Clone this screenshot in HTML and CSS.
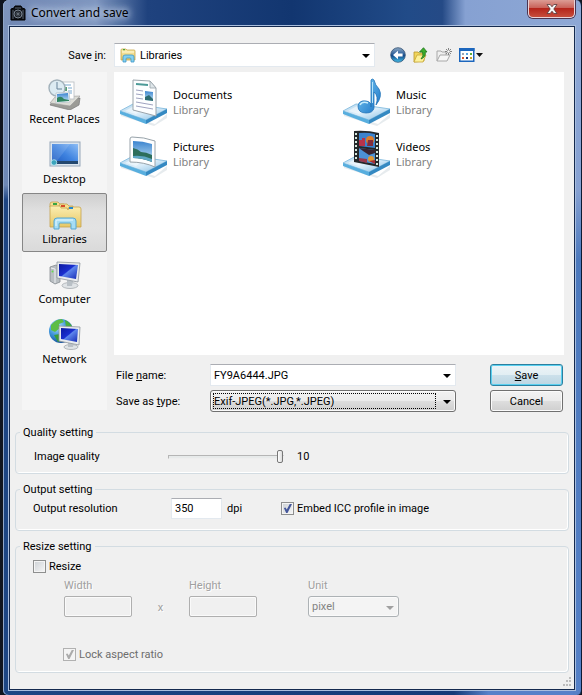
FILE: index.html
```html
<!DOCTYPE html>
<html lang="en">
<head>
<meta charset="UTF-8">
<title>Convert and save</title>
<link rel="stylesheet" href="styles.css">
</head>

<body>

<!-- shared gradients and the library base -->
<svg class="defs" aria-hidden="true">
    <defs>
        <linearGradient id="tray" x1="0" y1="0" x2="1" y2="1">
            <stop offset="0" stop-color="#b8d9ee"/>
            <stop offset="0.5" stop-color="#dceefa"/>
            <stop offset="1" stop-color="#7fbbe2"/>
        </linearGradient>
        <linearGradient id="folder" x1="0" y1="0" x2="0" y2="1">
            <stop offset="0" stop-color="#fbeeb2"/>
            <stop offset="1" stop-color="#e6c765"/>
        </linearGradient>
        <linearGradient id="sky" x1="0" y1="0" x2="0" y2="1">
            <stop offset="0" stop-color="#3b84cf"/>
            <stop offset="1" stop-color="#c9e8f6"/>
        </linearGradient>
        <linearGradient id="screen" x1="0" y1="0" x2="1" y2="1">
            <stop offset="0" stop-color="#0d1aa0"/>
            <stop offset="0.45" stop-color="#1a2fd0"/>
            <stop offset="0.5" stop-color="#5d86ec"/>
            <stop offset="1" stop-color="#1328b4"/>
        </linearGradient>
        <linearGradient id="desk" x1="0" y1="1" x2="1" y2="0">
            <stop offset="0" stop-color="#1a56bd"/>
            <stop offset="0.5" stop-color="#3f83e0"/>
            <stop offset="1" stop-color="#8dbdf5"/>
        </linearGradient>
        <linearGradient id="note" x1="0" y1="0" x2="1" y2="1">
            <stop offset="0" stop-color="#7fd0f7"/>
            <stop offset="1" stop-color="#1670c4"/>
        </linearGradient>
        <radialGradient id="globe" cx="0.35" cy="0.3" r="0.8">
            <stop offset="0" stop-color="#b5e4ff"/>
            <stop offset="0.5" stop-color="#3c92d8"/>
            <stop offset="1" stop-color="#10448e"/>
        </radialGradient>
        <linearGradient id="ball" x1="0" y1="0" x2="0" y2="1">
            <stop offset="0" stop-color="#8fa9c4"/>
            <stop offset="0.45" stop-color="#2c5f9a"/>
            <stop offset="0.55" stop-color="#124a8a"/>
            <stop offset="1" stop-color="#45c4ee"/>
        </linearGradient>
        <symbol id="base" viewBox="0 0 48 48">
            <path d="M1 35 L35 46 L47 36 V40 L34 48 L1 38 Z" fill="#d5dde3" opacity="0.6"/>
            <path d="M0 33 L13 26 L47 31 L26 42 Z" fill="url(#tray)" stroke="#8fc2e2"/>
            <path d="M0 33 L26 42 V46 L0 36 Z" fill="#58aede"/>
            <path d="M26 42 L47 31 V35 L26 46 Z" fill="#3489c2"/>
            <path d="M5 33 L14 28 L25 30 L16 36 Z" fill="#fff" opacity="0.5"/>
        </symbol>
    </defs>
</svg>

<div class="window">

    <header class="titlebar">
        <svg class="app-icon" width="16" height="16" viewBox="0 0 16 16">
            <path d="M1 4 L4 3 L5 1 H11 L12 3 L15 4 V15 H1 Z" fill="#0c0f14" stroke="#000"/>
            <path d="M3 5 V14 M13 5 V14 M5 3 H11" stroke="#56606c" fill="none"/>
            <circle cx="8" cy="9" r="4" fill="#181c22" stroke="#7a8592"/>
            <circle cx="8" cy="9" r="2" fill="#000" stroke="#525c68"/>
            <circle cx="8" cy="9" r="1" fill="#8793a0"/>
        </svg>
        <h1>Convert and save</h1>
        <button class="close" aria-label="Close">
            <svg width="12" height="10" viewBox="0 0 12 10">
                <path d="M1 0.5 H4.2 L6 2.8 L7.8 0.5 H11 L7.8 5 L11 9.5 H7.8 L6 7.2 L4.2 9.5 H1 L4.2 5 Z" fill="#f6f6f6" stroke="#56383a" stroke-width="0.8"/>
            </svg>
        </button>
    </header>

    <main class="client">

        <div class="lookin">
            <label for="folder-select">Save <u>i</u>n:</label>
            <div class="combo">
                <svg class="combo-icon" width="16" height="15" viewBox="0 0 16 15">
                    <path d="M1 2 Q1 1 2 1 H6 L7 2 H14 Q15 2 15 3 V12 H1 Z" fill="url(#folder)" stroke="#c9a84c" stroke-width="0.8"/>
                    <path d="M3 1.6 H5" stroke="#4aa33b" stroke-width="1.2"/>
                    <path d="M2 4 H14" stroke="#fff8d4"/>
                    <path d="M3 14 V9 Q3 7 5 7 H12 Q14 7 14 9 V14 H11 V11 Q11 10 10 10 H7 Q6 10 6 11 V14 Z" fill="#84d0f0" stroke="#3f98c8" stroke-width="0.8"/>
                </svg>
                <select id="folder-select" class="with-icon"><option>Libraries</option></select>
            </div>
            <div class="tools">
                <button aria-label="Back">
                    <svg width="16" height="16" viewBox="0 0 16 16">
                        <circle cx="8" cy="8" r="7.3" fill="url(#ball)" stroke="#345274" stroke-width="0.8"/>
                        <path d="M3 8 L8 3.8 V6.6 H12.6 V9.4 H8 V12.2 Z" fill="#fff"/>
                    </svg>
                </button>
                <button aria-label="Up one level">
                    <svg width="16" height="16" viewBox="0 0 16 16">
                        <path d="M1 5 H5 L6 6 H11 V14 L1 15 Z" fill="#f0d55c" stroke="#b7952b" stroke-width="0.8"/>
                        <path d="M1 15 L4 8 H13 L10 15 Z" fill="#fdf19a" stroke="#c7a636" stroke-width="0.8"/>
                        <path d="M8 12 Q11 9 9.6 5 H6.5 L10.5 0.7 L14 5 H12.2 Q13.2 10 8 12 Z" fill="#3cae2c" stroke="#1c7418" stroke-width="0.8"/>
                    </svg>
                </button>
                <button aria-label="New folder">
                    <svg width="16" height="16" viewBox="0 0 16 16">
                        <path d="M1 4 H5 L6 5 H10 V8 M1 4 V14" fill="#eee" stroke="#a8a8a8"/>
                        <path d="M1 14 L4 8 H14 L11 14 Z" fill="#f7f7f7" stroke="#a8a8a8"/>
                        <path d="M12.5 1 V8 M9 4.5 H16 M10 2 L15 7 M15 2 L10 7" stroke="#777" stroke-width="0.9"/>
                        <circle cx="12.5" cy="4.5" r="1.2" fill="#fff"/>
                    </svg>
                </button>
                <button aria-label="View menu">
                    <svg width="24" height="16" viewBox="0 0 24 16">
                        <rect x="0.75" y="1.75" width="14" height="12.5" fill="#fff" stroke="#1c66bd" stroke-width="1.5"/>
                        <rect x="0" y="1" width="15.5" height="3" fill="#1c66bd"/>
                        <path d="M3 7 H5" stroke="#9aa5b4" stroke-width="2"/>
                        <path d="M7 7 H9" stroke="#58a3e0" stroke-width="2"/>
                        <path d="M11 7 H13" stroke="#58ad3c" stroke-width="2"/>
                        <path d="M3 11 H5" stroke="#d6562b" stroke-width="2"/>
                        <path d="M7 11 H9" stroke="#163680" stroke-width="2"/>
                        <path d="M11 11 H13" stroke="#c9a42b" stroke-width="2"/>
                        <path d="M17 6 H24 L20.5 10 Z" fill="#111"/>
                    </svg>
                </button>
            </div>
        </div>

        <div class="browser">
            <nav class="places">
                <button>
                    <svg width="34" height="32" viewBox="0 0 34 32">
                        <path d="M2 27 L7 20 H32 L31 27 L22 32 Z" fill="#9b9b96" stroke="#777" stroke-width="0.7"/>
                        <path d="M2 25 L7 19 L32 18 L22 28 Z" fill="#dcdcd5" stroke="#999" stroke-width="0.6"/>
                        <rect x="13" y="4" width="13" height="17" fill="#fff" stroke="#b6bcc1" stroke-width="0.8"/>
                        <path d="M16 7 H23 M20 10 H24 M20 13 H24 M20 15 H24" stroke="#79a9cf"/>
                        <rect x="15" y="9" width="4" height="4" fill="#579f75"/>
                        <circle cx="9" cy="10" r="8" fill="#dcebf2" stroke="#a2b1ba" stroke-width="1.4"/>
                        <path d="M9 4 V11 H14" fill="none" stroke="#66839a"/>
                        <path d="M8 15 L21 14 L22 24 L8 25 Z" fill="#fff" stroke="#b8c3ca" stroke-width="0.8"/>
                        <path d="M9 16 L20 15 L21 23 L9 24 Z" fill="url(#sky)"/>
                        <path d="M9 20 Q13 17 16 21 L21 22 V23 L9 24 Z" fill="#2f8460"/>
                    </svg>
                    <span>Recent Places</span>
                </button>
                <button>
                    <svg width="34" height="32" viewBox="0 0 34 32">
                        <rect x="2" y="4" width="30" height="24" fill="#dbe5ef" stroke="#98a8ba"/>
                        <rect x="4" y="6" width="26" height="20" fill="url(#desk)"/>
                        <path d="M4 6 H22 L9 23 H4 Z" fill="#fff" opacity="0.12"/>
                        <rect x="4" y="23" width="26" height="3" fill="#24486f"/>
                        <circle cx="6" cy="24.5" r="2.8" fill="#3ba4bc" stroke="#b7eaf1" stroke-width="0.8"/>
                    </svg>
                    <span>Desktop</span>
                </button>
                <button class="active">
                    <svg width="34" height="32" viewBox="0 0 34 32">
                        <path d="M2 6 Q2 4 4 4 H10 L12 6 H16 V9 H2 Z" fill="#f6df91" stroke="#c5a24e" stroke-width="0.8"/>
                        <path d="M11 8 Q11 6 13 6 H19 L21 8 H25 V11 H11 Z" fill="#f6df91" stroke="#c5a24e" stroke-width="0.8"/>
                        <path d="M2 29 V8 H12 L13 10 H19 L20 12 L21 9 H31 Q33 9 33 11 V29 Z" fill="url(#folder)" stroke="#c5a24e" stroke-width="0.8"/>
                        <path d="M5 6 H9" stroke="#37a544" stroke-width="2"/>
                        <path d="M13 8 H17" stroke="#d64d28" stroke-width="2"/>
                        <path d="M21 10 H25" stroke="#2488d0" stroke-width="2"/>
                        <path d="M6 31 V23 Q6 20 9 20 H25 Q28 20 28 23 V31 H23 V26 Q23 25 22 25 H12 Q11 25 11 26 V31 Z" fill="#a6ddf4" stroke="#57a7d2"/>
                        <path d="M8 28 V23 Q8 22 9 22 H25" stroke="#e9f9ff" fill="none"/>
                    </svg>
                    <span>Libraries</span>
                </button>
                <button>
                    <svg width="34" height="32" viewBox="0 0 34 32">
                        <path d="M2 9 L8 7 L12 9 V24 L7 26 L2 23 Z" fill="#b9bec2" stroke="#858b90" stroke-width="0.8"/>
                        <path d="M3 10 L7 11 V25" fill="none" stroke="#eef1f3"/>
                        <circle cx="4.5" cy="13.5" r="1" fill="#64dc4c"/>
                        <ellipse cx="22" cy="27.5" rx="8" ry="3" fill="#dfe3e6" stroke="#a4aaaf" stroke-width="0.8"/>
                        <path d="M19 22 L25 23 L24 28 H19 Z" fill="#b9c0c6"/>
                        <path d="M9 4 L32 5 L30 24 L9 20 Z" fill="#e8ebee" stroke="#8e959c" stroke-width="0.8"/>
                        <path d="M11 6 L30 7 L28 21 L11 18 Z" fill="url(#screen)"/>
                    </svg>
                    <span>Computer</span>
                </button>
                <button>
                    <svg width="34" height="32" viewBox="0 0 34 32">
                        <circle cx="13" cy="13" r="12" fill="url(#globe)"/>
                        <path d="M3 7 Q8 1 14 1 L16 4 L11 6 L12 10 L7 14 L3 12 Z" fill="#5dbd45"/>
                        <path d="M17 2 Q23 5 24 9 L18 9 Z" fill="#4aae3c"/>
                        <path d="M6 17 L12 16 L14 22 L10 24 Z" fill="#3c9d38"/>
                        <ellipse cx="23" cy="29" rx="7" ry="2.5" fill="#dfe3e6" stroke="#a4aaaf" stroke-width="0.8"/>
                        <path d="M20 24 L26 25 L25 29 H20 Z" fill="#b9c0c6"/>
                        <path d="M11 8 L32 9 L31 27 L11 23 Z" fill="#e8ebee" stroke="#8e959c" stroke-width="0.8"/>
                        <path d="M13 10 L30 11 L29 24 L13 21 Z" fill="url(#screen)"/>
                    </svg>
                    <span>Network</span>
                </button>
            </nav>

            <div class="right">
                <ul class="files">
                    <li>
                        <svg width="48" height="48" viewBox="0 0 48 48">
                            <use href="#base"/>
                            <path d="M13 2 L30 3 L36 10 V38 L13 32 Z" fill="#fdfeff" stroke="#9aa4ab"/>
                            <path d="M30 3 V10 H36 Z" fill="#dfe6ea" stroke="#9aa4ab" stroke-width="0.8"/>
                            <path d="M16 6 L28 7" stroke="#4d9a98" stroke-width="2"/>
                            <path d="M16 12 L23 13 M16 16 L23 17 M16 20 L23 21 M16 24 L33 27 M16 28 L33 31" stroke="#9fa3c0"/>
                            <path d="M25 13 L33 14 V23 L25 22 Z" fill="url(#sky)"/>
                            <path d="M25 19 L29 17 L33 21 V23 L25 22 Z" fill="#2d6b72"/>
                        </svg>
                        <div><a href="#">Documents</a><span>Library</span></div>
                    </li>
                    <li>
                        <svg width="48" height="48" viewBox="0 0 48 48">
                            <use href="#base"/>
                            <path d="M28 29 V2 Q29 0 31 2 Q32 7 36 11 Q40 18 33 27 Q36 18 31 14 V30 Q30 35 23 35 Q15 35 15 28 Q16 22 23 23 Q26 23 28 26 Z" fill="url(#note)" stroke="#2373b8" stroke-width="0.8"/>
                            <path d="M17 27 Q19 23 25 25" stroke="#c5ecfc" stroke-width="1.5" fill="none"/>
                            <path d="M29.5 4 V25" stroke="#b4e4fb"/>
                        </svg>
                        <div><a href="#">Music</a><span>Library</span></div>
                    </li>
                    <li>
                        <svg width="48" height="48" viewBox="0 0 48 48">
                            <use href="#base"/>
                            <path d="M10 9 Q10 7 12 7 Q24 7 35 11 V37 Q24 32 10 32 Z" fill="#fdfeff" stroke="#98a3aa"/>
                            <path d="M13 11 Q23 11 32 14 V32 Q22 28 13 28 Z" fill="url(#sky)"/>
                            <path d="M13 18 Q18 19 21 22 Q26 22 32 25 V32 Q22 28 13 28 Z" fill="#2d6e5b"/>
                            <path d="M13 26 Q23 25 32 29 V32 Q22 28 13 28 Z" fill="#5fa7c5"/>
                        </svg>
                        <div><a href="#">Pictures</a><span>Library</span></div>
                    </li>
                    <li>
                        <svg width="48" height="48" viewBox="0 0 48 48">
                            <use href="#base"/>
                            <path d="M11 1 Q24 0 36 3 V37 L11 32 Z" fill="#24282b"/>
                            <path d="M13 3 V31 M34 5 V35" stroke="#d7e8de" stroke-width="2" stroke-dasharray="2 2"/>
                            <path d="M16 3 Q24 2 32 4 V18 L16 16 Z" fill="#3c83ce"/>
                            <path d="M16 18 L32 20 V34 L16 31 Z" fill="#4c92d6"/>
                            <path d="M16 10 H19 V8 H22 V16 L16 16 Z" fill="#b7334b"/>
                            <circle cx="27" cy="10" r="4" fill="#dc7e2c"/>
                            <path d="M25 10 H30 V16 H24 Z" fill="#822c3c"/>
                            <path d="M16 18 L32 20 V23 L26 25 L20 21 Z" fill="#3a2430"/>
                            <circle cx="28" cy="29" r="3" fill="#e09834"/>
                            <path d="M16 28 L24 29 V33 L16 31 Z" fill="#98384c"/>
                            <path d="M26 31 L32 30 V34 Z" fill="#a52f35"/>
                        </svg>
                        <div><a href="#">Videos</a><span>Library</span></div>
                    </li>
                </ul>

                <form class="names">
                    <label for="file-name">File <u>n</u>ame:</label>
                    <div class="combo">
                        <input id="file-name" type="text" value="FY9A6444.JPG">
                    </div>
                    <button type="button" class="btn default"><u>S</u>ave</button>
                    <label for="file-type">Save as <u>t</u>ype:</label>
                    <div class="combo focused">
                        <select id="file-type" class="raised"><option>Exif-JPEG(*.JPG,*.JPEG)</option></select>
                    </div>
                    <button type="button" class="btn">Cancel</button>
                </form>
            </div>
        </div>

        <div class="settings">
            <fieldset>
                <legend>Quality setting</legend>
                <div class="row quality">
                    <label for="quality">Image quality</label>
                    <input id="quality" type="range" min="1" max="10" value="10">
                    <output for="quality">10</output>
                </div>
            </fieldset>

            <fieldset>
                <legend>Output setting</legend>
                <div class="row resolution">
                    <label for="dpi">Output resolution</label>
                    <input id="dpi" class="sunken" type="text" value="350">
                    <span>dpi</span>
                    <label class="check"><input type="checkbox" checked>Embed ICC profile in image</label>
                </div>
            </fieldset>

            <fieldset class="resize">
                <legend>Resize setting</legend>
                <label class="check"><input type="checkbox">Resize</label>
                <div class="size">
                    <div class="field">
                        <label for="width">Width</label>
                        <input id="width" type="text" disabled>
                    </div>
                    <span class="times">x</span>
                    <div class="field">
                        <label for="height">Height</label>
                        <input id="height" type="text" disabled>
                    </div>
                    <div class="field unit">
                        <label for="unit">Unit</label>
                        <div class="combo disabled">
                            <select id="unit" class="raised" disabled><option>pixel</option></select>
                        </div>
                    </div>
                </div>
                <label class="check lock"><input type="checkbox" checked disabled>Lock aspect ratio</label>
            </fieldset>
        </div>

        <svg class="grip" width="10" height="10" viewBox="0 0 10 10">
            <path d="M7 0h2v2h-2z M4 3h2v2h-2z M7 3h2v2h-2z M1 7h2v2h-2z M4 7h2v2h-2z M7 7h2v2h-2z" fill="#bcbcbc"/>
        </svg>
    </main>
</div>

</body>
</html>
```

FILE: styles.css
```css
* {
    box-sizing: border-box;
}

body {
    margin: 0;
    min-height: 100vh;
    display: flex;
    background: #10151f;
    font: 11px/15px Roboto, "Noto Sans", sans-serif;
    color: #000;
}

.defs {
    position: absolute;
    width: 0;
    height: 0;
}

button, input, select {
    font: inherit;
    color: inherit;
    margin: 0;
}

/* Window frame */
.window {
    flex: 1;
    display: flex;
    flex-direction: column;
    margin-left: 3px;
    padding: 0 6px 5px;
    border-right: 1px solid #0c1a33;
    border-radius: 6px 6px 5px 5px;
    background:
        linear-gradient(#8ea8d5, #86a1d2 190px, #4c79bd 260px, #5580c6) right / 8px 100% no-repeat,
        linear-gradient(#7d94bd, #6d87b5 185px, #1d4482 200px, #1d4684) left / 7px 100% no-repeat,
        linear-gradient(90deg, #1d4684 0, #143a78 78%, #5781c9 84%, #5781c9) bottom / 100% 8px no-repeat,
        linear-gradient(90deg, #7087b3 0, #7f97c0 16%, #1f427e 25%, #123670 50%, #214b88 70%, #254a86 76%, #86a1d2 80%, #8ea8d5);
    box-shadow: inset 1px 0 #8fa6c9;
}

.titlebar {
    display: flex;
    align-items: center;
    height: 26px;
    padding-left: 1px;
}

.titlebar h1 {
    margin: 0 0 0 5px;
    font: 12px/16px "Noto Sans", sans-serif;
    text-shadow: 0 0 6px #c5d3e8, 0 0 8px #c5d3e8, 0 0 10px #b5c6e0;
}

.close {
    align-self: flex-start;
    display: flex;
    align-items: center;
    justify-content: center;
    width: 47px;
    height: 18px;
    margin-left: auto;
    padding: 0;
    border: 1px solid #e9d3d8;
    border-top: 0;
    border-radius: 0 0 5px 5px;
    background: linear-gradient(#dc9c94, #c9635a 45%, #b5251b 50%, #c64d3c);
    box-shadow: 0 0 0 1px #4b3450;
}

.client {
    position: relative;
    flex: 1;
    display: flex;
    flex-direction: column;
    border: 1px solid #14294e;
    outline: 1px solid #a9bede;
    background: #f0f0f0;
}

/* Folder row */
.lookin {
    display: grid;
    grid-template-columns: 96px minmax(0, 261px) auto;
    column-gap: 8px;
    align-items: center;
    padding: 16px 0 5px;
}

.lookin > label {
    text-align: right;
}

.combo {
    position: relative;
    display: flex;
}

.combo::after {
    content: "";
    position: absolute;
    right: 5px;
    top: 50%;
    margin-top: -1px;
    border: 4px solid transparent;
    border-top-color: #000;
    border-bottom: 0;
    pointer-events: none;
}

.combo input, .combo select {
    flex: 1;
    min-width: 0;
    height: 22px;
    padding: 0 20px 0 3px;
    appearance: none;
    border: 1px solid #e3e9ef;
    border-top-color: #abadb3;
    border-radius: 0;
    background: #fff;
    outline: none;
}

.combo select.with-icon {
    height: 24px;
    padding-left: 25px;
}

.combo-icon {
    position: absolute;
    left: 6px;
    top: 5px;
}

.combo select.raised {
    border: 1px solid #707070;
    border-radius: 3px;
    background: linear-gradient(#f2f2f2, #ebebeb 48%, #dddddd 52%, #cfcfcf);
    box-shadow: inset 0 0 0 1px #fafafa;
}

.focused::before {
    content: "";
    position: absolute;
    inset: 3px 20px 3px 3px;
    border: 1px dotted #000;
    pointer-events: none;
}

.tools {
    display: flex;
    gap: 7px;
    padding-left: 7px;
}

.tools button {
    display: flex;
    padding: 0;
    border: 0;
    background: none;
}

/* Places and library list */
.browser {
    display: flex;
    align-items: flex-start;
    gap: 7px;
    padding: 0 10px 0 12px;
}

.places {
    display: flex;
    flex-direction: column;
    flex: none;
    width: 85px;
    padding: 1px 0 37px;
    background: #f5f5f5;
}

.places button {
    display: flex;
    flex-direction: column;
    align-items: center;
    height: 60px;
    padding: 4px 0 0;
    border: 1px solid transparent;
    background: none;
    font-family: "Noto Sans", sans-serif;
    line-height: 18px;
}

.places .active {
    height: 59px;
    margin-bottom: 1px;
    border-color: #868686;
    border-radius: 2px;
    background: linear-gradient(#cfcfcf, #e0e0e0 30%, #e3e3e3 60%, #dadada);
}

.right {
    flex: 1;
    min-width: 0;
}

.files {
    display: grid;
    grid-template-columns: 223px 1fr;
    grid-auto-rows: 52px;
    align-content: start;
    min-height: 283px;
    margin: 0;
    padding: 6px 0 0 6px;
    list-style: none;
    background: #fff;
    font-family: "Noto Sans", sans-serif;
}

.files li {
    display: flex;
    gap: 5px;
}

.files div {
    display: flex;
    flex-direction: column;
    padding-top: 9px;
}

.files a {
    color: #000;
    text-decoration: none;
}

.files span {
    color: #7f7f7f;
}

.names {
    display: grid;
    grid-template-columns: 94px minmax(0, 246px) 1fr;
    row-gap: 4px;
    align-items: center;
    padding: 9px 1px 0 2px;
}

.btn {
    justify-self: end;
    width: 73px;
    height: 22px;
    padding: 0;
    border: 1px solid #707070;
    border-radius: 3px;
    background: linear-gradient(#f3f3f3, #ebebeb 48%, #dddddd 52%, #cfcfcf);
    box-shadow: inset 0 0 0 1px #fbfbfb;
}

.btn.default {
    border-color: #2c7f9f;
    background: linear-gradient(#edf4f7, #e2eef3 48%, #cbe0ea 52%, #bcd6e3);
    box-shadow: inset 0 0 0 1px #5ad0f0;
}

/* Setting groups */
.settings {
    display: flex;
    flex-direction: column;
    gap: 8px;
    padding: 13px 5px 0;
}

fieldset {
    min-width: 0;
    min-height: 49px;
    margin: 0;
    padding: 0 0 0 17px;
    border: 1px solid #d3dce2;
    border-radius: 4px;
    box-shadow: inset -1px -1px #fff;
}

legend {
    margin-left: -13px;
    padding: 0 3px;
}

.row {
    display: grid;
    align-items: center;
}

.quality {
    grid-template-columns: 134px 116px auto;
    padding: 9px 0 0 1px;
}

.quality output {
    padding-left: 13px;
}

input[type="range"] {
    appearance: none;
    width: 100%;
    height: 14px;
    background: none;
}

input[type="range"]::-webkit-slider-runnable-track {
    height: 4px;
    border: 1px solid #b5b5b5;
    border-right-color: #eee;
    border-bottom-color: #eee;
    background: #e7eaea;
}

input[type="range"]::-webkit-slider-thumb {
    appearance: none;
    width: 6px;
    height: 13px;
    margin-top: -6px;
    border: 1px solid #777;
    border-radius: 2px;
    background: linear-gradient(90deg, #fff, #dcdcdc);
}

.resolution {
    grid-template-columns: 138px 51px 59px auto;
    padding-top: 1px;
}

.resolution > span {
    padding-left: 5px;
}

.sunken {
    width: 100%;
    height: 21px;
    padding: 0 3px;
    border: 1px solid #e3e9ef;
    border-top-color: #abadb3;
    background: #fff;
}

.check {
    display: flex;
    align-items: center;
    gap: 3px;
}

input[type="checkbox"] {
    appearance: none;
    display: grid;
    place-items: center;
    flex: none;
    width: 13px;
    height: 13px;
    border: 1px solid #8e8f8f;
    background: linear-gradient(135deg, #cdd1d5, #f6f6f6);
    box-shadow: inset 0 0 0 1px #f4f4f4;
}

input[type="checkbox"]:checked::before {
    content: "";
    width: 9px;
    height: 9px;
    background: #45579b;
    clip-path: polygon(10% 45%, 28% 38%, 42% 62%, 75% 0, 100% 0, 50% 100%, 35% 100%);
}

.resize {
    min-height: 134px;
}

.resize > .check {
    margin-top: 5px;
}

.size {
    display: flex;
    align-items: flex-end;
    padding: 4px 0 0 31px;
    color: #a0a0a0;
    text-shadow: 1px 1px #fff;
}

.field {
    display: flex;
    flex-direction: column;
    gap: 3px;
    width: 68px;
}

.field input {
    width: 100%;
    height: 21px;
    border: 1px solid #afafaf;
    border-radius: 2px;
    background: #f0f0f0;
    box-shadow: inset 0 0 0 1px #fafafa;
}

.times {
    width: 57px;
    padding-bottom: 2px;
    text-align: center;
}

.field.unit {
    width: 91px;
    margin-left: 51px;
}

.unit select.raised {
    height: 21px;
    border-color: #adb2b5;
    background: #f4f4f4;
    color: #838383;
    opacity: 1;
}

.disabled::after {
    border-top-color: #a0a0a0;
}

.resize > .lock {
    margin: 30px 0 0 30px;
    color: #6d6d6d;
}

.lock input[type="checkbox"] {
    border-color: #b1b1b1;
    background: #f4f4f4;
}

.lock input[type="checkbox"]::before {
    background: #ababab;
}

.grip {
    position: absolute;
    right: 2px;
    bottom: 2px;
}
```
